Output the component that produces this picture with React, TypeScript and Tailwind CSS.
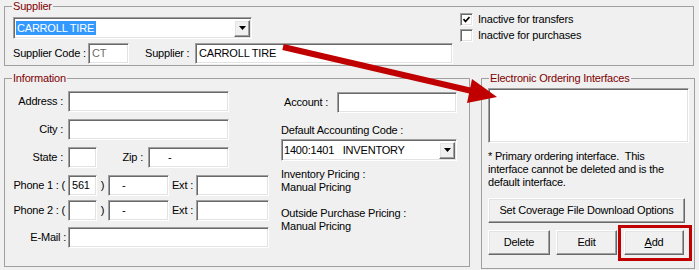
import React from 'react';

const sunken =
  'bg-white border border-t-[#a0a0a0] border-l-[#a0a0a0] border-b-white border-r-white shadow-[inset_1px_1px_0_#696969,inset_-1px_-1px_0_#e3e3e3]';
const raised =
  'bg-[#f0f0f0] border border-t-white border-l-white border-b-[#696969] border-r-[#696969] shadow-[inset_-1px_-1px_0_#a0a0a0,inset_1px_1px_0_#e3e3e3]';

type Kids = { className?: string; children?: React.ReactNode };

const Field = ({ className = '', children }: Kids) => (
  <div className={`${sunken} h-[21px] flex items-center px-[3px] whitespace-pre ${className}`}>{children}</div>
);

const DropBtn = () => (
  <div className={`${raised} w-[16px] h-[17px] flex items-center justify-center shrink-0`}>
    <svg width="7" height="4" viewBox="0 0 7 4">
      <path d="M0 0h7L3.5 4z" fill="#000" />
    </svg>
  </div>
);

const Combo = ({ className = '', children }: Kids) => (
  <div className={`${sunken} h-[22px] flex items-center pl-[2px] pr-[1px] ${className}`}>
    <div className="flex-1 min-w-0 flex items-center whitespace-pre">{children}</div>
    <DropBtn />
  </div>
);

const Group = ({ title, className = '', children }: Kids & { title: string }) => (
  <fieldset className={`border border-[#a0a0a0] ${className}`}>
    <legend className="ml-[7px] px-[1px] leading-[13px] text-[#800000]">{title}</legend>
    {children}
  </fieldset>
);

const Check = ({ checked, label }: { checked?: boolean; label: string }) => (
  <div className="flex items-center h-[13px]">
    <div className={`${sunken} w-[13px] h-[13px] flex items-center justify-center shrink-0`}>
      {checked && (
        <svg width="7" height="7" viewBox="0 0 7 7">
          <path d="M0.5 3 L2.5 5.5 L6.5 1" stroke="#000" strokeWidth="1.6" fill="none" />
        </svg>
      )}
    </div>
    <span className="ml-[5px]">{label}</span>
  </div>
);

const Button = ({ className = '', children }: Kids) => (
  <div className={`${raised} h-[25px] flex items-center justify-center ${className}`}>{children}</div>
);

export default function App() {
  return (
    <div className="relative w-[699px] h-[270px] overflow-hidden bg-[#f0f0f0] text-black font-['Liberation_Sans',Arial,sans-serif] text-[11px] leading-[13px] tracking-[-0.2px] pl-[4px]">
      {/* Supplier */}
      <Group title="Supplier" className="w-[690px] h-[66px]">
        <div className="flex pl-[8px]">
          <div className="w-[440px] flex flex-col pt-[4px] gap-[4px]">
            <Combo className="w-[239px]">
              <span className="bg-[#3399ff] text-white pl-[1px] pr-[2px] leading-[14px]">CARROLL TIRE</span>
            </Combo>
            <div className="flex items-center h-[21px]">
              <span className="w-[75px]">Supplier Code :</span>
              <Field className="w-[41px] text-[#6d6d6d]">CT</Field>
              <span className="ml-[16px] w-[50px]">Supplier :</span>
              <Field className="w-[258px]">CARROLL TIRE</Field>
            </div>
          </div>
          <div className="ml-[7px] flex flex-col gap-[3px]">
            <Check checked label="Inactive for transfers" />
            <Check label="Inactive for purchases" />
          </div>
        </div>
      </Group>

      <div className="flex mt-[6px]">
        {/* Information */}
        <Group title="Information" className="w-[466px] h-[195px]">
          <div className="flex">
            <div className="w-[264px] flex flex-col pt-[6px]">
              <div className="flex items-center">
                <span className="w-[58px] text-right">Address :</span>
                <Field className="ml-[5px] w-[161px]" />
              </div>
              <div className="flex items-center mt-[7px]">
                <span className="w-[58px] text-right">City :</span>
                <Field className="ml-[5px] w-[161px]" />
              </div>
              <div className="flex items-center mt-[7px]">
                <span className="w-[58px] text-right">State :</span>
                <Field className="ml-[5px] w-[29px]" />
                <span className="w-[46px] text-right">Zip :</span>
                <Field className="ml-[5px] w-[81px] pl-[19px]">-</Field>
              </div>
              <div className="flex items-center mt-[7px]">
                <span className="w-[60px] text-right">Phone 1 : (</span>
                <Field className="ml-[3px] w-[29px]">561</Field>
                <span className="w-[11px] text-center">)</span>
                <Field className="w-[61px] pl-[13px]">-</Field>
                <span className="w-[24px] text-right">Ext :</span>
                <Field className="ml-[3px] w-[73px]" />
              </div>
              <div className="flex items-center mt-[4px]">
                <span className="w-[60px] text-right">Phone 2 : (</span>
                <Field className="ml-[3px] w-[29px]" />
                <span className="w-[11px] text-center">)</span>
                <Field className="w-[61px] pl-[13px]">-</Field>
                <span className="w-[24px] text-right">Ext :</span>
                <Field className="ml-[3px] w-[73px]" />
              </div>
              <div className="flex items-center mt-[6px]">
                <span className="w-[61px] text-right">E-Mail :</span>
                <Field className="ml-[2px] w-[201px]" />
              </div>
            </div>
            <div className="ml-[12px] w-[176px] flex flex-col">
              <div className="flex items-center mt-[7px]">
                <span className="w-[56px] pl-[3px]">Account :</span>
                <Field className="w-[120px]" />
              </div>
              <div className="mt-[11px]">Default Accounting Code :</div>
              <Combo className="mt-[2px] w-[176px]">1400:1401   INVENTORY</Combo>
              <div className="mt-[7px]">Inventory Pricing :</div>
              <div>Manual Pricing</div>
              <div className="mt-[13px]">Outside Purchase Pricing :</div>
              <div>Manual Pricing</div>
            </div>
          </div>
        </Group>

        {/* Electronic Ordering Interfaces */}
        <Group title="Electronic Ordering Interfaces" className="ml-[11px] w-[214px] h-[197px]">
          <div className="flex flex-col pl-[6px]">
            <div className={`${sunken} mt-[3px] w-[201px] h-[55px]`} />
            <div className="mt-[7px] w-[205px]">
              * Primary ordering interface.&nbsp; This
              <br />
              interface cannot be deleted and is the
              <br />
              default interface.
            </div>
            <Button className="mt-[9px] w-[197px]">Set Coverage File Download Options</Button>
            <div className="flex mt-[7px]">
              <Button className="w-[62px]">Delete</Button>
              <Button className="ml-[6px] w-[61px]">Edit</Button>
              <div className="relative ml-[7px]">
                <Button className="w-[60px]">
                  <span className="underline">A</span>dd
                </Button>
                <div className="absolute -left-[6px] -top-[5px] w-[74px] h-[36px] border-[3px] border-[#c00000]" />
              </div>
            </div>
          </div>
        </Group>
      </div>

      {/* Callout arrow */}
      <svg className="absolute left-0 top-0 pointer-events-none" width="699" height="270" viewBox="0 0 699 270">
        <line x1="283" y1="47" x2="472" y2="91" stroke="#c00000" strokeWidth="6" />
        <polygon points="497,97 472,79 467,103" fill="#c00000" />
      </svg>
    </div>
  );
}
